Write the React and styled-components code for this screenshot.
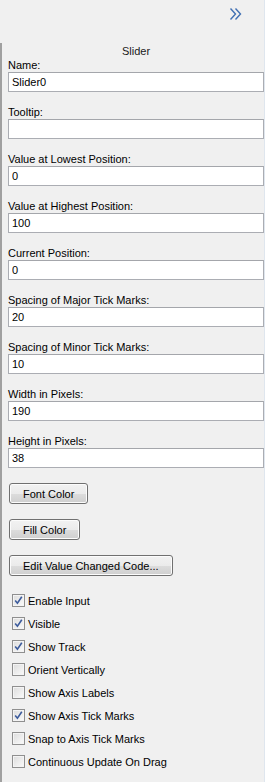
import React from "react";
import styled, { createGlobalStyle } from "styled-components";

const GlobalStyle = createGlobalStyle`
  html, body {
    margin: 0;
    padding: 0;
    background: #f0f0f0;
  }
  body {
    font-family: "Liberation Sans", Arial, sans-serif;
    font-size: 11px;
    color: #000;
  }
`;

const fields = [
  { label: "Name:", value: "Slider0" },
  { label: "Tooltip:", value: "" },
  { label: "Value at Lowest Position:", value: "0" },
  { label: "Value at Highest Position:", value: "100" },
  { label: "Current Position:", value: "0" },
  { label: "Spacing of Major Tick Marks:", value: "20" },
  { label: "Spacing of Minor Tick Marks:", value: "10" },
  { label: "Width in Pixels:", value: "190" },
  { label: "Height in Pixels:", value: "38" },
];

const buttons = ["Font Color", "Fill Color", "Edit Value Changed Code..."];

const options = [
  { label: "Enable Input", checked: true },
  { label: "Visible", checked: true },
  { label: "Show Track", checked: true },
  { label: "Orient Vertically", checked: false },
  { label: "Show Axis Labels", checked: false },
  { label: "Show Axis Tick Marks", checked: true },
  { label: "Snap to Axis Tick Marks", checked: false },
  { label: "Continuous Update On Drag", checked: false },
];

const App = () => {
  return (
    <>
      <GlobalStyle />
      <Sidebar>
        <TopBar>
          <Collapse aria-label="collapse">
            <svg width="14" height="14" viewBox="0 0 14 14">
              <path d="M1.5 1.5 L6.5 7 L1.5 12.5" fill="none" stroke="#4170b3" strokeWidth="1.4" />
              <path d="M6.5 1.5 L11.5 7 L6.5 12.5" fill="none" stroke="#4170b3" strokeWidth="1.4" />
            </svg>
          </Collapse>
        </TopBar>
        <Panel>
          <Title>Slider</Title>
          {fields.map((f) => (
            <Field key={f.label}>
              <Label>{f.label}</Label>
              <Input defaultValue={f.value} />
            </Field>
          ))}
          <Buttons>
            {buttons.map((b) => (
              <Button key={b}>{b}</Button>
            ))}
          </Buttons>
          <Options>
            {options.map((o) => (
              <Option key={o.label}>
                <Box>
                  {o.checked && (
                    <svg width="9" height="9" viewBox="0 0 9 9">
                      <path d="M1.2 4.6 L3.4 7.2 L7.8 0.8" fill="none" stroke="#3c5b9c" strokeWidth="1.6" />
                    </svg>
                  )}
                </Box>
                {o.label}
              </Option>
            ))}
          </Options>
        </Panel>
      </Sidebar>
    </>
  );
};

const Sidebar = styled.div`
  width: 265px;
  height: 782px;
  display: flex;
  flex-direction: column;
  background: #f0f0f0;
  overflow: hidden;
  border-right: 1px solid #dfe6ee;
  box-sizing: border-box;
`;

const TopBar = styled.div`
  height: 43px;
  display: flex;
  justify-content: flex-end;
  padding: 7px 21px 0 0;
  box-sizing: border-box;
`;

const Collapse = styled.div`
  width: 14px;
  height: 14px;
`;

const Panel = styled.div`
  flex: 1;
  border-left: 2px solid #a0a0a0;
  padding: 1px 0 0 6px;
  display: flex;
  flex-direction: column;
`;

const Title = styled.div`
  height: 14px;
  line-height: 14px;
  text-align: center;
  color: #1a1a1a;
`;

const Field = styled.div`
  display: flex;
  flex-direction: column;
  margin-bottom: 13px;
`;

const Label = styled.div`
  height: 14px;
  line-height: 14px;
`;

const Input = styled.input`
  height: 20px;
  width: 256px;
  box-sizing: border-box;
  border: 1px solid #abadb3;
  border-top-color: #a4a6ab;
  background: #fff;
  font: inherit;
  padding: 0 3px;
  margin: 0;
  outline: none;
`;

const Buttons = styled.div`
  display: flex;
  flex-direction: column;
  align-items: flex-start;
  gap: 15px;
  padding: 2px 0 0 1px;
`;

const Button = styled.button`
  height: 21px;
  padding: 0 13px;
  border: 1px solid #707070;
  border-radius: 3px;
  background: linear-gradient(#f2f2f2 0%, #ebebeb 50%, #dddddd 51%, #cfcfcf 100%);
  font: inherit;
  color: #000;
  box-shadow: inset 0 0 0 1px #fcfcfc;
`;

const Options = styled.div`
  display: flex;
  flex-direction: column;
  padding: 13px 0 0 4px;
`;

const Option = styled.label`
  height: 23px;
  display: flex;
  align-items: center;
  gap: 3px;
`;

const Box = styled.span`
  width: 13px;
  height: 13px;
  box-sizing: border-box;
  border: 1px solid #8f8f8f;
  background: linear-gradient(135deg, #dcdcdc, #fbfbfb);
  box-shadow: inset 0 0 0 1px #f4f4f4;
  display: flex;
  align-items: center;
  justify-content: center;
`;

export default App;
